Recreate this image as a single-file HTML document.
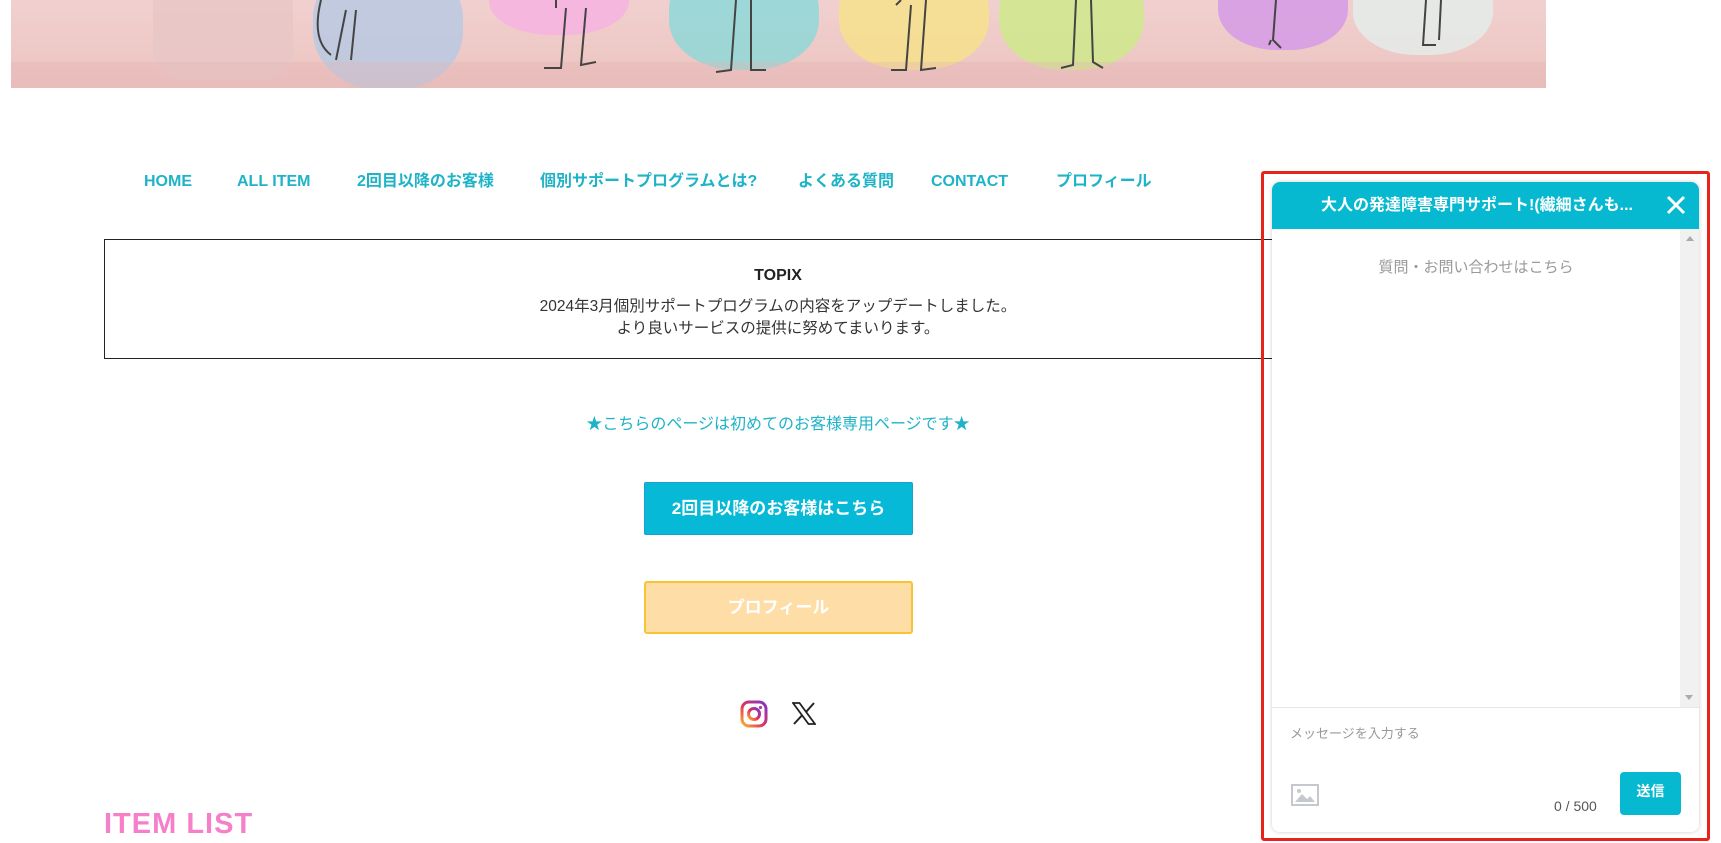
<!DOCTYPE html>
<html><head><meta charset="utf-8"><style>
*{margin:0;padding:0;box-sizing:border-box}
body{width:1721px;height:843px;overflow:hidden;background:#fff;position:relative;font-family:"Liberation Sans","Noto Sans CJK JP",sans-serif}
.abs{position:absolute}
.banner{left:11px;top:0;width:1535px;height:88px;overflow:hidden;background:linear-gradient(180deg,#f0d0cf 0%,#eec9c6 60%,#e9c0bd 100%)}
.blob{position:absolute;border-radius:45%;opacity:.85}
.nav{top:171px;height:22px;line-height:22px;font-size:16px;font-weight:bold;color:#1fb3c8;white-space:nowrap}
.topix{left:104px;top:239px;width:1348px;height:120px;border:1.5px solid #222}
.c{text-align:center}
</style></head><body>
<div class="abs banner">
  <div class="blob" style="left:142px;top:-20px;width:140px;height:100px;background:#e8c6c6;border-radius:0 0 30px 30px;opacity:.9"></div>
  <div class="blob" style="left:302px;top:-40px;width:150px;height:130px;background:#b9c9e2"></div>
  <div class="blob" style="left:478px;top:-40px;width:140px;height:75px;background:#f6b3e0"></div>
  <div class="blob" style="left:658px;top:-40px;width:150px;height:110px;background:#8fd8d8"></div>
  <div class="blob" style="left:828px;top:-40px;width:150px;height:110px;background:#f6e08c"></div>
  <div class="blob" style="left:988px;top:-40px;width:145px;height:110px;background:#cfe98c"></div>
  <div class="blob" style="left:1207px;top:-40px;width:130px;height:90px;background:#d59be6"></div>
  <div class="blob" style="left:1342px;top:-40px;width:140px;height:95px;background:#e4ecea"></div>
  <div class="abs" style="left:0;top:62px;width:1535px;height:26px;background:rgba(230,180,180,.35)"></div>
  <svg class="abs" style="left:0;top:0" width="1535" height="88" fill="none" stroke="#444" stroke-width="2">
    <path d="M310 0 Q300 40 320 55 M335 10 L325 60 M345 10 L340 60"/>
    <path d="M545 0 L545 8 M555 8 L550 68 L533 68 M575 8 L570 65 L585 62"/>
    <path d="M725 0 L720 70 L705 72 M740 0 L740 70 L755 70"/>
    <path d="M890 0 L885 5 M900 5 L895 70 L880 70 M915 0 L910 70 L925 68"/>
    <path d="M1065 0 L1062 65 L1050 68 M1080 0 L1082 62 L1092 68"/>
    <path d="M1265 0 L1262 40 L1270 48 M1260 40 L1258 45"/>
    <path d="M1415 0 L1412 45 L1425 45 M1430 0 L1428 40"/>
  </svg>
</div>

<div class="abs nav" style="left:144px">HOME</div>
<div class="abs nav" style="left:237px">ALL ITEM</div>
<div class="abs nav" style="left:357px">2回目以降のお客様</div>
<div class="abs nav" style="left:540px">個別サポートプログラムとは?</div>
<div class="abs nav" style="left:798px">よくある質問</div>
<div class="abs nav" style="left:931px">CONTACT</div>
<div class="abs nav" style="left:1056px">プロフィール</div>

<div class="abs topix">
  <div class="c" style="margin-top:26px;font-weight:bold;font-size:16px;line-height:20px;color:#222">TOPIX</div>
  <div class="c" style="margin-top:10px;font-size:15.5px;line-height:22px;color:#333">2024年3月個別サポートプログラムの内容をアップデートしました。<br>より良いサービスの提供に努めてまいります。</div>
</div>

<div class="abs c" style="left:0;width:1556px;top:410px;font-size:16px;color:#1fb3c8">★こちらのページは初めてのお客様専用ページです★</div>

<div class="abs c" style="left:644px;top:482px;width:269px;height:53px;background:#06b9d6;border:1px solid #1a9fd0;border-radius:2px;color:#fff;font-weight:bold;font-size:17px;line-height:51px">2回目以降のお客様はこちら</div>
<div class="abs c" style="left:644px;top:581px;width:269px;height:53px;background:#fedda6;border:2px solid #f7c534;border-radius:3px;color:#fff;font-weight:bold;font-size:17px;line-height:49px">プロフィール</div>

<svg class="abs" style="left:740px;top:700px" width="28" height="28" viewBox="0 0 28 28">
  <defs><linearGradient id="ig" x1="0" y1="1" x2="1" y2="0"><stop offset="0" stop-color="#fdb42a"/><stop offset=".45" stop-color="#e4305f"/><stop offset="1" stop-color="#7a37c8"/></linearGradient></defs>
  <rect x="2" y="2" width="24" height="24" rx="7" fill="none" stroke="url(#ig)" stroke-width="3"/>
  <circle cx="14" cy="14" r="5.5" fill="none" stroke="url(#ig)" stroke-width="3"/>
  <circle cx="20.5" cy="7.5" r="1.6" fill="#b63aa8"/>
</svg>
<svg class="abs" style="left:792px;top:702px" width="24" height="23" viewBox="0 0 24 23">
  <path d="M1 1h6.5l15.5 21h-6.5z" fill="none" stroke="#222" stroke-width="1.8"/>
  <path d="M22 1L14 10M2 22l8.3-9" stroke="#222" stroke-width="2"/>
</svg>

<div class="abs" style="left:104px;top:808px;font-size:29px;font-weight:bold;color:#f57fc8;letter-spacing:1px">ITEM LIST</div>

<div class="abs" style="left:1261px;top:171px;width:449px;height:670px;border:3px solid #e8231c;border-radius:3px"></div>
<div class="abs" style="left:1272px;top:182px;width:427px;height:650px;background:#fff;border-radius:8px;box-shadow:0 0 4px rgba(0,0,0,.2);overflow:hidden">
  <div style="height:47px;background:#06b9d0;color:#fff;font-weight:bold;font-size:16px;line-height:47px;padding-left:49px;position:relative">大人の発達障害専門サポート!(繊細さんも...
    <svg style="position:absolute;right:13px;top:13px" width="20" height="20"><path d="M2 2L18 18M18 2L2 18" stroke="#fff" stroke-width="3"/></svg>
  </div>
  <div style="position:absolute;right:0;top:47px;width:19px;height:478px;background:#f1f1f1">
    <div style="margin:7px auto;width:0;height:0;border:4px solid transparent;border-bottom:5px solid #aaa;border-top:0"></div>
    <div style="position:absolute;bottom:7px;left:5px;width:0;height:0;border:4px solid transparent;border-top:5px solid #aaa;border-bottom:0"></div>
  </div>
  <div style="position:absolute;left:0;width:408px;top:74px;text-align:center;font-size:15px;color:#999">質問・お問い合わせはこちら</div>
  <div style="position:absolute;left:0;right:0;top:525px;border-top:1px solid #e6e6e6"></div>
  <div style="position:absolute;left:18px;top:541px;font-size:13px;color:#999">メッセージを入力する</div>
  <svg style="position:absolute;left:19px;top:602px" width="28" height="22"><rect x="1" y="1" width="26" height="20" fill="none" stroke="#c5c8cc" stroke-width="2"/><path d="M4 18l7-8 5 5 3-3 5 6z" fill="#c5c8cc"/><circle cx="8" cy="7" r="2" fill="#c5c8cc"/></svg>
  <div style="position:absolute;left:282px;top:616px;font-size:14px;color:#555">0 / 500</div>
  <div style="position:absolute;left:348px;top:590px;width:61px;height:43px;background:#06b9d0;border-radius:4px;color:#fff;font-weight:bold;font-size:14px;text-align:center;line-height:38px">送信</div>
</div>
</body></html>
